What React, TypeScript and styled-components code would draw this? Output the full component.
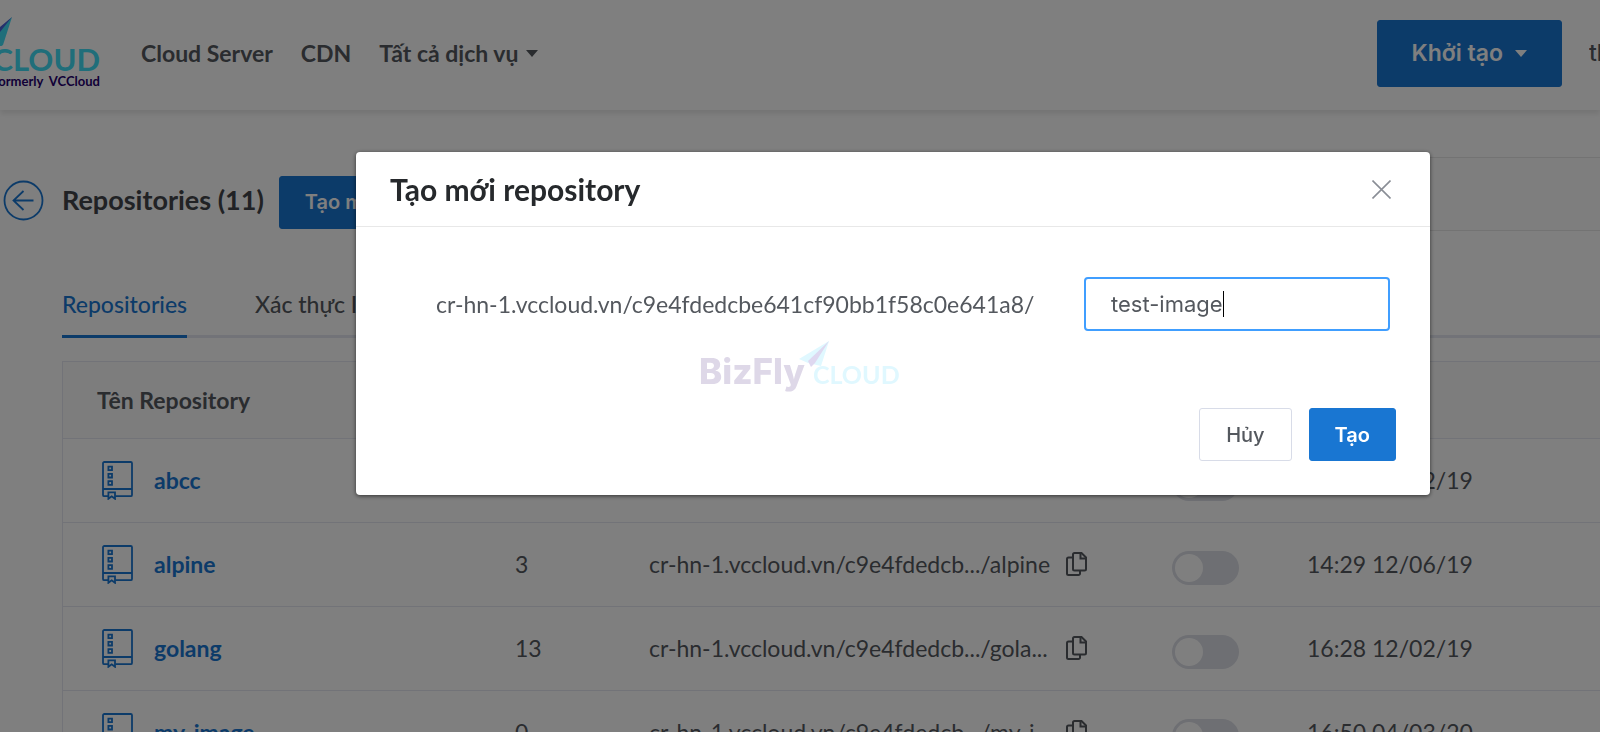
import React, { useState } from "react";
import styled, { createGlobalStyle } from "styled-components";

const blue = "#1976d2";
const line = "#e4e7f0";
const latin = `Lato, "Open Sans", sans-serif`;
const system = `Inter, Roboto, sans-serif`;

const GlobalStyle = createGlobalStyle`
  *, *::before, *::after { box-sizing: border-box; }
  body {
    margin: 0;
    height: 100vh;
    overflow: hidden;
    background: #fff;
    color: #54585e;
    font: 23px/32px ${latin};
  }
  button, input { font: inherit; color: inherit; margin: 0; }
  a { color: inherit; text-decoration: none; }
`;

const Header = styled.header`
  display: flex;
  align-items: center;
  height: 110px;
  padding-bottom: 4px;
  box-shadow: 0 4px 5px rgba(0, 0, 0, 0.09);
`;

const Brand = styled.a`
  display: flex;
  flex-direction: column;
  align-items: flex-end;
  align-self: flex-start;
  flex: none;
  width: 100px;
  height: 106px;
  padding-top: 14px;
  overflow: hidden;
  white-space: nowrap;
`;

const BrandPlane = styled.svg`
  width: 100px;
  height: 32px;
  flex: none;
`;

const BrandName = styled.span`
  color: #40dcf4;
  font-size: 31px;
  font-weight: 700;
  line-height: 27px;
`;

const BrandNote = styled.span`
  color: #24006e;
  font-size: 13px;
  font-weight: 700;
  line-height: 16px;
`;

const Nav = styled.nav`
  display: flex;
  align-items: center;
  gap: 28px;
  flex: 1;
  padding-left: 41px;
  font-weight: 700;
  white-space: nowrap;
`;

const NavLink = styled.a`
  display: flex;
  align-items: center;
  gap: 8px;
`;

const Caret = styled.span`
  border: 6px solid transparent;
  border-top: 7px solid currentColor;
  border-bottom: 0;
`;

const Button = styled.button<{ $tone?: "plain"; $large?: boolean }>`
  display: inline-flex;
  align-items: center;
  justify-content: center;
  gap: 12px;
  flex: none;
  height: ${(p) => (p.$large ? 67 : 53)}px;
  padding: 0 ${(p) => (p.$large ? 34 : p.$tone ? 26 : 25)}px;
  border: 1px solid ${(p) => (p.$tone ? "#d8dce8" : blue)};
  border-radius: 3px;
  background: ${(p) => (p.$tone ? "#fff" : blue)};
  color: ${(p) => (p.$tone ? "#54585e" : "#fff")};
  font-family: ${system};
  font-size: ${(p) => (p.$large ? 23 : 20)}px;
  font-weight: ${(p) => (p.$tone ? 500 : 600)};
  white-space: nowrap;
`;

const Account = styled.a`
  flex: none;
  width: 11px;
  margin-left: 27px;
  overflow: hidden;
  font-family: ${system};
  font-weight: 500;
`;

const Main = styled.main`
  padding: 47px 0 0 3px;
`;

const TitleBar = styled.div`
  display: flex;
  align-items: center;
  height: 74px;
  padding-top: 2px;
`;

const BackLink = styled.a`
  display: flex;
  margin-top: 10px;
`;

const Title = styled.h1`
  margin: 10px 0 0 18px;
  color: #42454a;
  font-size: 27px;
  font-weight: 700;
  line-height: 32px;
  white-space: nowrap;
`;

const TitleAction = styled.div`
  display: flex;
  margin: 14px 0 0 15px;
`;

const TitlePanel = styled.div`
  flex: 1;
  height: 74px;
  margin: -2px 0 0 80px;
  border: solid #e6e6e6;
  border-width: 1px 0;
  background: #fdfdfd;
`;

const Tabs = styled.nav`
  display: flex;
  gap: 68px;
  height: 107px;
  margin-left: 59px;
  align-items: flex-end;
  box-shadow: inset 0 -3px 0 ${line};
  white-space: nowrap;
`;

const Tab = styled.a<{ $active?: boolean }>`
  padding-bottom: 15px;
  border-bottom: 3px solid ${(p) => (p.$active ? blue : "transparent")};
  color: ${(p) => (p.$active ? blue : "inherit")};
  font-weight: 500;
`;

const Table = styled.table`
  width: calc(100% - 59px);
  margin: 23px 0 0 59px;
  table-layout: fixed;
  border-collapse: separate;
  border-spacing: 0;
  border: solid ${line};
  border-width: 1px 0 0 1px;
  white-space: nowrap;
`;

const HeadCell = styled.th<{ $width?: number }>`
  width: ${(p) => (p.$width ? `${p.$width}px` : "auto")};
  height: 77px;
  padding: 0 0 0 34px;
  border-bottom: 1px solid ${line};
  background: #fafafa;
  font-weight: 700;
  text-align: left;
`;

const Cell = styled.td`
  height: 84px;
  padding: 0 0 1px 34px;
  border-bottom: 1px solid ${line};
`;

const RepoLink = styled.a`
  display: flex;
  align-items: center;
  gap: 21px;
  padding-left: 5px;
  color: ${blue};
  font-weight: 700;
`;

const Address = styled.span`
  display: flex;
  align-items: center;
`;

const AddressText = styled.span`
  min-width: 402px;
  margin-right: 15px;
`;

const CopyButton = styled.button`
  display: flex;
  padding: 0;
  border: 0;
  background: none;
`;

const Switch = styled.input`
  display: block;
  appearance: none;
  width: 67px;
  height: 34px;
  margin: 7px 0 0;
  padding: 3px;
  border-radius: 17px;
  background: #dcdee6;

  &::before {
    content: "";
    display: block;
    width: 28px;
    height: 28px;
    border-radius: 50%;
    background: #fff;
  }

  &:checked {
    background: ${blue};
  }

  &:checked::before {
    margin-left: auto;
  }
`;

const Overlay = styled.div`
  position: fixed;
  inset: 0;
  padding: 152px 170px 0 356px;
  background: rgba(0, 0, 0, 0.5);
`;

const Dialog = styled.form`
  position: relative;
  display: flex;
  flex-direction: column;
  border-radius: 4px;
  background: #fff;
  box-shadow: 0 1px 4px rgba(0, 0, 0, 0.6);
`;

const DialogHeader = styled.div`
  display: flex;
  align-items: center;
  justify-content: space-between;
  height: 75px;
  padding: 0 39px 0 34px;
  border-bottom: 1px solid #e8e8e8;
`;

const DialogTitle = styled.h2`
  margin: 0;
  color: #26292c;
  font-size: 30px;
  font-weight: 700;
  line-height: 40px;
`;

const CloseButton = styled.button`
  display: flex;
  padding: 0;
  border: 0;
  background: none;
  color: #8a8e96;
`;

const Field = styled.div`
  display: flex;
  align-items: center;
  justify-content: space-between;
  padding: 50px 40px 0 80px;
`;

const InputBox = styled.span`
  position: relative;
  flex: none;
`;

const NameInput = styled.input`
  display: block;
  width: 306px;
  height: 54px;
  padding: 0 25px;
  border: 2px solid #409eff;
  border-radius: 4px;
  outline: 0;
  background: #fff;
  caret-color: transparent;
  font: 22px ${system};
`;

const TextCursor = styled.span`
  position: absolute;
  top: 14px;
  left: 139px;
  width: 1px;
  height: 26px;
  background: #000;
`;

const Watermark = styled.div`
  position: absolute;
  top: 189px;
  left: 343px;
  display: flex;
  align-items: baseline;
  gap: 8px;
  color: #ded8e8;
  font: 800 35px/60px ${system};
`;

const WatermarkCloud = styled.span`
  color: #e0f8ff;
  font: 700 25px/60px ${latin};
`;

const WatermarkPlane = styled.svg`
  position: absolute;
  top: 0;
  left: 100px;
`;

const Actions = styled.div`
  display: flex;
  justify-content: flex-end;
  gap: 17px;
  padding: 77px 34px 34px;
`;

const RepoIcon = () => (
  <svg width="31" height="39" viewBox="0 0 31 39" fill="none" stroke="currentColor" strokeWidth="1.8" aria-hidden="true">
    <path d="M6 35.2H2.3A1.3 1.3 0 0 1 1 33.9V2.3A1.3 1.3 0 0 1 2.3 1h26.4A1.3 1.3 0 0 1 30 2.3v31.6a1.3 1.3 0 0 1-1.3 1.3H13.5M1 28h29" />
    <path d="M6.4 5.6h3.6v3.6H6.4zM6.4 12.9h3.6v3.6H6.4zM6.4 20.2h3.6v3.6H6.4z" />
    <path d="M6.4 31.3h6.6v6.5l-3.3-2.5-3.3 2.5z" />
  </svg>
);

const CopyIcon = () => (
  <svg width="21" height="24" viewBox="0 0 21 24" fill="none" stroke="currentColor" strokeWidth="2" aria-hidden="true">
    <path d="M8.5 1h7L20 5.5V17a1.5 1.5 0 0 1-1.5 1.5h-10A1.5 1.5 0 0 1 7 17V2.5A1.5 1.5 0 0 1 8.5 1z" />
    <path d="M14.5 1.5v5h5" />
    <path d="M7 5.5H2.5A1.5 1.5 0 0 0 1 7v14.5A1.5 1.5 0 0 0 2.5 23h10a1.5 1.5 0 0 0 1.5-1.5v-3" />
  </svg>
);

interface Repo {
  name: string;
  tags: number;
  address: string;
  updated: string;
}

const repos: Repo[] = [
  { name: "abcc", tags: 1, address: "cr-hn-1.vccloud.vn/c9e4fdedcb.../abcc", updated: "14:30 12/12/19" },
  { name: "alpine", tags: 3, address: "cr-hn-1.vccloud.vn/c9e4fdedcb.../alpine", updated: "14:29 12/06/19" },
  { name: "golang", tags: 13, address: "cr-hn-1.vccloud.vn/c9e4fdedcb.../gola...", updated: "16:28 12/02/19" },
  { name: "my-image", tags: 0, address: "cr-hn-1.vccloud.vn/c9e4fdedcb.../my-i...", updated: "16:50 04/03/20" },
];

export default function App() {
  const [name, setName] = useState("test-image");

  return (
    <>
      <GlobalStyle />
      <Header>
        <Brand href="#">
          <BrandPlane viewBox="0 0 100 32" aria-hidden="true">
            <path d="M12 3 0 14v19l3-2z" fill="#40dcf4" />
            <path d="M12 3 0 13v5z" fill="#4a62d8" />
          </BrandPlane>
          <BrandName>CLOUD</BrandName>
          <BrandNote>formerly&nbsp; VCCloud</BrandNote>
        </Brand>
        <Nav>
          <NavLink href="#">Cloud Server</NavLink>
          <NavLink href="#">CDN</NavLink>
          <NavLink href="#">
            Tất cả dịch vụ <Caret />
          </NavLink>
        </Nav>
        <Button type="button" $large>
          Khởi tạo <Caret />
        </Button>
        <Account href="#">th</Account>
      </Header>

      <Main>
        <TitleBar>
          <BackLink href="#" aria-label="Back">
            <svg width="41" height="41" viewBox="0 0 41 41" fill="none" stroke={blue} strokeWidth="1.8" aria-hidden="true">
              <circle cx="20.5" cy="20.5" r="19" />
              <path d="M30.5 20.5h-20M20.5 11l-10 9.5 10 9.5" />
            </svg>
          </BackLink>
          <Title>Repositories (11)</Title>
          <TitleAction>
            <Button type="button">Tạo mới</Button>
          </TitleAction>
          <TitlePanel />
        </TitleBar>

        <Tabs>
          <Tab href="#" $active>Repositories</Tab>
          <Tab href="#">Xác thực IP</Tab>
        </Tabs>

        <Table>
          <thead>
            <tr>
              <HeadCell $width={418}>Tên Repository</HeadCell>
              <HeadCell $width={134} />
              <HeadCell $width={523} />
              <HeadCell $width={135} />
              <HeadCell />
            </tr>
          </thead>
          <tbody>
            {repos.map((repo) => (
              <tr key={repo.name}>
                <Cell>
                  <RepoLink href="#">
                    <RepoIcon />
                    {repo.name}
                  </RepoLink>
                </Cell>
                <Cell>{repo.tags}</Cell>
                <Cell>
                  <Address>
                    <AddressText>{repo.address}</AddressText>
                    <CopyButton type="button" aria-label={`Copy ${repo.name}`}>
                      <CopyIcon />
                    </CopyButton>
                  </Address>
                </Cell>
                <Cell>
                  <Switch type="checkbox" aria-label={`Public ${repo.name}`} />
                </Cell>
                <Cell>{repo.updated}</Cell>
              </tr>
            ))}
          </tbody>
        </Table>
      </Main>

      <Overlay>
        <Dialog role="dialog" aria-labelledby="dialog-title" onSubmit={(e) => e.preventDefault()}>
          <DialogHeader>
            <DialogTitle id="dialog-title">Tạo mới repository</DialogTitle>
            <CloseButton type="button" aria-label="Close">
              <svg width="19" height="19" viewBox="0 0 19 19" stroke="currentColor" strokeWidth="1.6" aria-hidden="true">
                <path d="M.5.5l18 18M18.5.5l-18 18" />
              </svg>
            </CloseButton>
          </DialogHeader>
          <Field>
            <label htmlFor="repo-name">cr-hn-1.vccloud.vn/c9e4fdedcbe641cf90bb1f58c0e641a8/</label>
            <InputBox>
              <NameInput id="repo-name" value={name} onChange={(e) => setName(e.target.value)} />
              <TextCursor />
            </InputBox>
          </Field>
          <Watermark aria-hidden="true">
            BizFly
            <WatermarkCloud>CLOUD</WatermarkCloud>
            <WatermarkPlane width="31" height="28" viewBox="0 0 31 28">
              <path d="M30 0 0 18l9 4 13 3z" fill="#e0f8ff" />
              <path d="M30 0 9 20l3 6 4-4z" fill="#ded8f0" />
            </WatermarkPlane>
          </Watermark>
          <Actions>
            <Button type="button" $tone="plain">Hủy</Button>
            <Button type="submit">Tạo</Button>
          </Actions>
        </Dialog>
      </Overlay>
    </>
  );
}
